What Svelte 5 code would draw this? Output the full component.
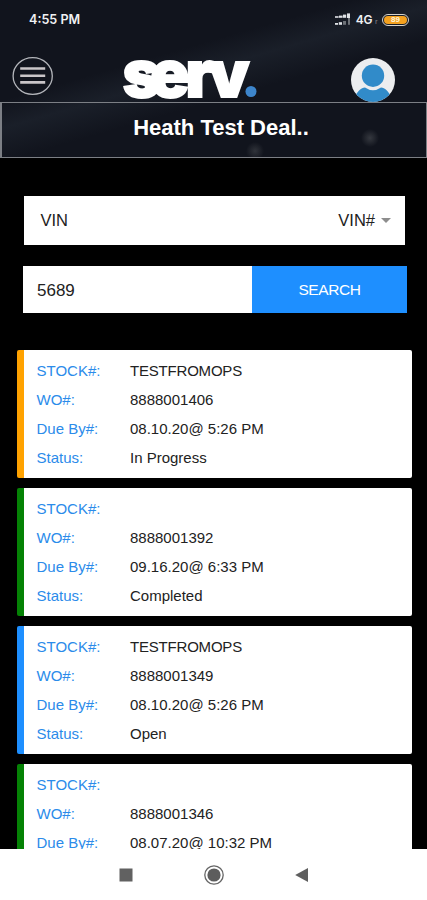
<script>
  let field = 'VIN';
  let query = '5689';

  const orders = [
    { stock: 'TESTFROMOPS', wo: '8888001406', due: '08.10.20@ 5:26 PM', status: 'In Progress' },
    { stock: '', wo: '8888001392', due: '09.16.20@ 6:33 PM', status: 'Completed' },
    { stock: 'TESTFROMOPS', wo: '8888001349', due: '08.10.20@ 5:26 PM', status: 'Open' },
    { stock: '', wo: '8888001346', due: '08.07.20@ 10:32 PM', status: 'Completed' }
  ];

  function getStatusClass(status) {
    switch (status) {
      case 'In Progress':
        return 'progress';
      case 'Completed':
        return 'completed';
      default:
        return 'open';
    }
  }
</script>

<div class="screen">
  <header>
    <div class="status-bar">
      <span class="time">4:55 PM</span>
      <div class="indicators">
        <svg class="signal" width="17" height="13" viewBox="0 0 17 13">
          <g fill="#dfe2e6">
            <rect x="1" y="3.2" width="3.6" height="1.6" />
            <rect x="5" y="2.6" width="3.6" height="2.2" />
            <rect x="9" y="1.6" width="3.2" height="3.2" />
            <rect x="13" y="0.4" width="3" height="4.6" />
            <rect x="1" y="10" width="3" height="1.8" />
            <rect x="4.8" y="9.2" width="3.2" height="2.6" />
          </g>
          <g fill="#6d7177">
            <rect x="9" y="8" width="3" height="3.8" />
            <rect x="14" y="5" width="2" height="6.8" />
          </g>
        </svg>
        <span class="network">4G</span>
        <span class="network-small">r</span>
        <span class="battery"><span>89</span></span>
      </div>
    </div>

    <div class="nav">
      <button class="menu" aria-label="Menu">
        <svg width="42" height="40" viewBox="0 0 42 40">
          <ellipse cx="20.7" cy="20" rx="19.6" ry="18.3" fill="none" stroke="#b4b6bb" stroke-width="1.3" />
          <path d="M8.2 12.5h25M8.2 19.7h25M8.2 26.4h25" stroke="#c9c5c8" stroke-width="2.6" />
        </svg>
      </button>
      <svg class="logo" width="136" height="46" viewBox="0 0 136 46">
        <text x="0.5 28 63.5 86.5" y="42">serv</text>
        <circle cx="129" cy="36.5" r="5.5" fill="#3d85cb" />
      </svg>
      <button class="avatar" aria-label="Profile">
        <svg width="46" height="46" viewBox="0 0 46 46">
          <defs>
            <clipPath id="face"><circle cx="23" cy="23" r="22" /></clipPath>
          </defs>
          <circle cx="23" cy="23" r="22" fill="#ecedef" />
          <g clip-path="url(#face)">
            <path d="M5 39C8 34 11 31 15 30.5Q23 36 31 30.5C35 31 38 34 41 39V46H5z" fill="#318bc9" />
            <circle cx="23" cy="18.7" r="13.2" fill="#ecedef" />
            <circle cx="23" cy="18.7" r="11.2" fill="#318bc9" />
          </g>
        </svg>
      </button>
    </div>

    <div class="dealer">Heath Test Deal..</div>
  </header>

  <main>
    <div class="select">
      <span>{field}</span>
      <span class="choice">VIN#<i class="caret"></i></span>
    </div>

    <div class="search">
      <input type="text" bind:value={query} />
      <button>SEARCH</button>
    </div>

    <div class="orders">
      {#each orders as order}
        <div class="card {getStatusClass(order.status)}">
          <div class="row"><span class="label">STOCK#:</span><span class="stock">{order.stock}</span></div>
          <div class="row"><span class="label">WO#:</span><span>{order.wo}</span></div>
          <div class="row"><span class="label">Due By#:</span><span>{order.due}</span></div>
          <div class="row"><span class="label">Status:</span><span>{order.status}</span></div>
        </div>
      {/each}
    </div>
  </main>

  <footer>
    <svg width="14" height="14" viewBox="0 0 14 14"><rect x="0.5" y="0.5" width="13" height="13" fill="#616161" /></svg>
    <svg width="22" height="22" viewBox="0 0 22 22">
      <circle cx="11" cy="11" r="9.2" fill="none" stroke="#666" stroke-width="1.3" />
      <circle cx="11" cy="11" r="6.6" fill="#5d5d5d" />
    </svg>
    <svg width="14" height="14" viewBox="0 0 14 14"><path d="M13 0V14L.2 7z" fill="#5f5f5f" /></svg>
  </footer>
</div>

<style>
  :global(body) {
    margin: 0;
    background: #000;
  }

  .screen {
    height: 900px;
    display: flex;
    flex-direction: column;
    overflow: hidden;
    background: #000;
    color: #222;
    font-family: 'Liberation Sans', Arial, sans-serif;
  }

  button {
    border: 0;
    padding: 0;
    background: none;
    font-family: inherit;
  }

  svg {
    display: block;
  }

  header {
    flex: none;
    height: 158px;
    display: flex;
    flex-direction: column;
    background:
      radial-gradient(circle at 370px 138px, #35383f 0, #35383f00 9px),
      radial-gradient(circle at 255px 151px, #30333a 0, #30333a00 9px),
      linear-gradient(164deg, #1c212b00 36%, #1a1f29 46%, #1c212b00 58%),
      #11141d;
  }

  .status-bar {
    height: 38px;
    box-sizing: border-box;
    padding: 1px 18px 0 29px;
    display: flex;
    align-items: center;
    justify-content: space-between;
    color: #f0f1f3;
  }

  .time {
    font: 600 12.6px Inter, sans-serif;
  }

  .indicators {
    display: flex;
    align-items: center;
  }

  .network {
    margin-left: 5px;
    font: 600 12px Inter, sans-serif;
    letter-spacing: -0.4px;
  }

  .network-small {
    width: 7px;
    margin: 4px 0 0 3px;
    color: #7d8086;
    font-size: 8px;
  }

  .battery {
    width: 27px;
    height: 12px;
    box-sizing: border-box;
    padding: 1px;
    border: 1px solid #d6d3cc;
    border-radius: 6px;
    display: flex;
  }

  .battery span {
    flex: 1;
    border-radius: 4px;
    background: #f4a11f;
    color: #fff4d8;
    font-size: 8px;
    font-weight: 700;
    line-height: 8px;
    text-align: center;
  }

  .nav {
    height: 64px;
    box-sizing: border-box;
    padding: 0 31px 0 12px;
    display: flex;
    align-items: center;
    justify-content: space-between;
  }

  .menu {
    margin-bottom: -12px;
  }

  .logo {
    margin: 15px 0 0 -24px;
    overflow: visible;
  }

  .logo text {
    fill: #fff;
    stroke: #fff;
    stroke-width: 1.8px;
    font: 900 65px Inter, sans-serif;
  }

  .avatar {
    margin-bottom: -19px;
  }

  .dealer {
    height: 56px;
    box-sizing: border-box;
    padding-left: 14px;
    border: 1.5px solid #7c7f85;
    border-left-width: 2px;
    color: #fff;
    font-size: 22px;
    font-weight: 700;
    line-height: 50px;
    text-align: center;
  }

  main {
    flex: 1;
    min-height: 0;
    padding: 38px 15px 0 16.5px;
    overflow: hidden;
  }

  .select {
    height: 49px;
    margin: 0 7px;
    box-sizing: border-box;
    padding: 0 14px 0 17px;
    display: flex;
    align-items: center;
    justify-content: space-between;
    background: #fff;
    font-size: 16.5px;
  }

  .choice {
    display: flex;
    align-items: center;
  }

  .caret {
    margin-left: 6px;
    border: 5px solid transparent;
    border-top-color: #8d8d8d;
    border-bottom: 0;
  }

  .search {
    height: 47px;
    margin: 21px 5px 37px 6.5px;
    display: flex;
  }

  .search input {
    width: 229px;
    box-sizing: border-box;
    padding: 2px 14px 0;
    border: 0;
    border-radius: 0;
    background: #fff;
    color: #222;
    font: inherit;
    font-size: 17px;
  }

  .search button {
    flex: 1;
    background: #1e8fff;
    color: #fff;
    font-size: 15.5px;
    letter-spacing: -0.4px;
  }

  .orders {
    display: flex;
    flex-direction: column;
    gap: 10px;
  }

  .card {
    height: 128px;
    box-sizing: border-box;
    padding: 6px 0 0 13px;
    border-left: 7px solid #1e8fff;
    border-radius: 2px;
    background: #fff;
  }

  .card.progress {
    border-left-color: #ffa200;
  }

  .card.completed {
    border-left-color: #058205;
  }

  .row {
    height: 29px;
    display: flex;
    font-size: 15px;
    line-height: 29px;
  }

  .label {
    width: 93.5px;
    color: #2b8bea;
  }

  .stock {
    letter-spacing: -0.2px;
  }

  footer {
    flex: none;
    height: 51px;
    display: flex;
    align-items: center;
    justify-content: center;
    gap: 70px;
    background: #fff;
  }
</style>
